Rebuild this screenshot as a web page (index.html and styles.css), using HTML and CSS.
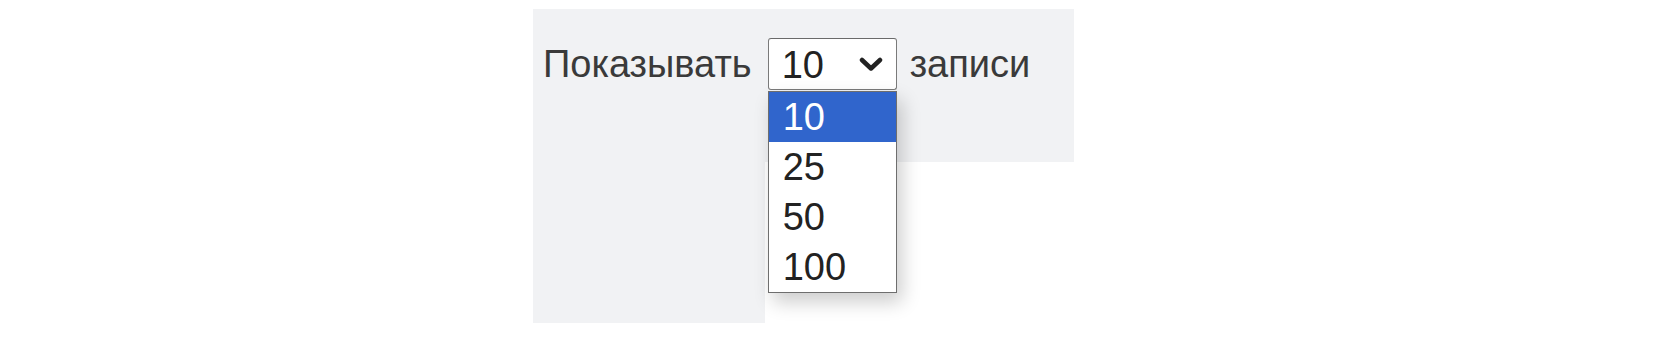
FILE: index.html
```html
<!DOCTYPE html>
<html lang="ru">
<head>
  <meta charset="UTF-8" />
  <meta name="viewport" content="width=device-width, initial-scale=1.0"/>
  <title>Показывать записи</title>
  <link rel="stylesheet" href="styles.css">
</head>
<body>

<div class="panel">
  <div class="panel-top">
    <div class="length">
      <span class="length-label">Показывать</span>
      <div class="select">
        <span class="select-value">10</span>
        <svg class="chevron" width="24" height="15" viewBox="0 0 24 15">
          <path d="M3 3 L12 11.5 L21 3" fill="none" stroke="#222" stroke-width="4.5" stroke-linecap="round" stroke-linejoin="round"/>
        </svg>
        <ul class="options">
          <li class="option selected">10</li>
          <li class="option">25</li>
          <li class="option">50</li>
          <li class="option">100</li>
        </ul>
      </div>
      <span class="length-label">записи</span>
    </div>
  </div>
  <div class="panel-side"></div>
  <div class="panel-main"></div>
</div>

</body>
</html>
```

FILE: styles.css
```css
* {
  margin: 0;
  padding: 0;
  box-sizing: border-box;
}

body {
  font-family: 'Liberation Sans', Arial, sans-serif;
  background: #ffffff;
  color: #333;
}

.panel {
  margin: 9px 0 0 533px;
  width: 541px;
  height: 314px;
  display: grid;
  grid-template-columns: 232px 1fr;
  grid-template-rows: 153px 1fr;
}

.panel-top {
  grid-column: 1 / 3;
  background-color: #f1f2f4;
  padding: 29px 0 0 10px;
  position: relative;
  z-index: 2;
}

.panel-side {
  background-color: #f1f2f4;
}

.panel-main {
  background-color: #ffffff;
}

.length {
  display: flex;
  align-items: center;
  font-size: 38px;
  line-height: 1;
}

.length-label {
  color: #3a3a3a;
}

.select {
  position: relative;
  width: 129px;
  height: 52px;
  margin: 0 13px 0 16px;
  padding: 0 13px 0 13px;
  display: flex;
  align-items: center;
  justify-content: space-between;
  background-color: #fff;
  border: 1px solid #7a7a7a;
  border-top-color: #6a6a6a;
  border-radius: 3px;
  color: #222;
}

.select-value {
  padding-top: 2px;
}

.chevron {
  margin-top: 1px;
}

.options {
  list-style: none;
  position: absolute;
  left: -1px;
  top: 52px;
  width: 129px;
  background-color: #fff;
  border: 1px solid #6e6e6e;
  box-shadow: 5px 9px 18px rgba(0, 0, 0, 0.2);
}

.option {
  height: 50px;
  line-height: 50px;
  padding-left: 14px;
  color: #222;
}

.option.selected {
  background-color: #3065cc;
  color: #fff;
}
```
